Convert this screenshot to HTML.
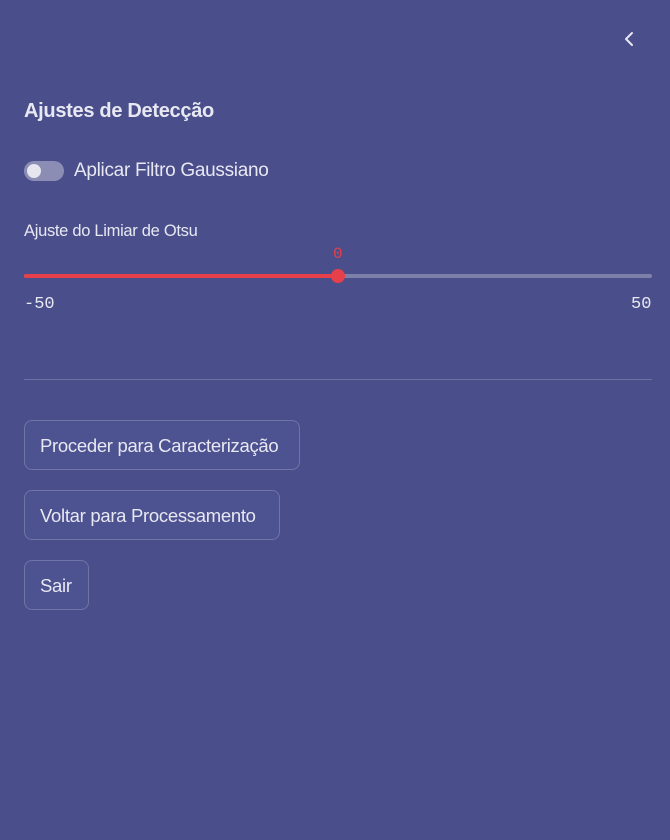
<!DOCTYPE html>
<html><head><style>
html,body{margin:0;padding:0;width:670px;height:840px;background:#4a4e8b;overflow:hidden;font-family:"Liberation Sans",sans-serif;color:#e8e8f2}
.a{position:absolute;white-space:nowrap}
.btn{position:absolute;left:24px;height:50px;border:1px solid rgba(255,255,255,0.2);border-radius:8px;background:#4d5291;box-sizing:border-box;font-size:18.5px;line-height:50px;padding:0 15px;letter-spacing:-0.3px}
</style></head><body>
<svg class="a" style="left:622px;top:31px" width="14" height="16" viewBox="0 0 14 16"><path d="M10 2 L4 8 L10 14" stroke="#e8e8f2" stroke-width="2" fill="none" stroke-linecap="round" stroke-linejoin="round"/></svg>
<div class="a" style="left:24px;top:100px;font-size:20px;font-weight:bold;letter-spacing:-0.3px">Ajustes de Detecção</div>
<div class="a" style="left:24px;top:161px;width:40px;height:20px;border-radius:10px;background:#8b8db5"></div>
<div class="a" style="left:27px;top:164px;width:14px;height:14px;border-radius:7px;background:#e6e6ee"></div>
<div class="a" style="left:74px;top:160px;font-size:19px;letter-spacing:-0.3px">Aplicar Filtro Gaussiano</div>
<div class="a" style="left:24px;top:222px;font-size:16.5px;letter-spacing:-0.3px">Ajuste do Limiar de Otsu</div>
<div class="a" style="left:333px;top:245px;font-size:16px;font-family:'Liberation Mono',monospace;color:#e8404a">0</div>
<div class="a" style="left:24px;top:274px;width:628px;height:4px;border-radius:2px;background:#7d80a8"></div>
<div class="a" style="left:24px;top:274px;width:314px;height:4px;border-radius:2px;background:#e8404a"></div>
<div class="a" style="left:331px;top:269px;width:14px;height:14px;border-radius:7px;background:#e8404a"></div>
<div class="a" style="left:24px;top:295px;font-size:17px;font-family:'Liberation Mono',monospace">-50</div>
<div class="a" style="left:631px;top:295px;font-size:17px;font-family:'Liberation Mono',monospace">50</div>
<div class="a" style="left:24px;top:379px;width:628px;height:1px;background:rgba(255,255,255,0.2)"></div>
<div class="btn" style="top:420px;width:276px">Proceder para Caracterização</div>
<div class="btn" style="top:490px;width:256px">Voltar para Processamento</div>
<div class="btn" style="top:560px;width:65px">Sair</div>
</body></html>
